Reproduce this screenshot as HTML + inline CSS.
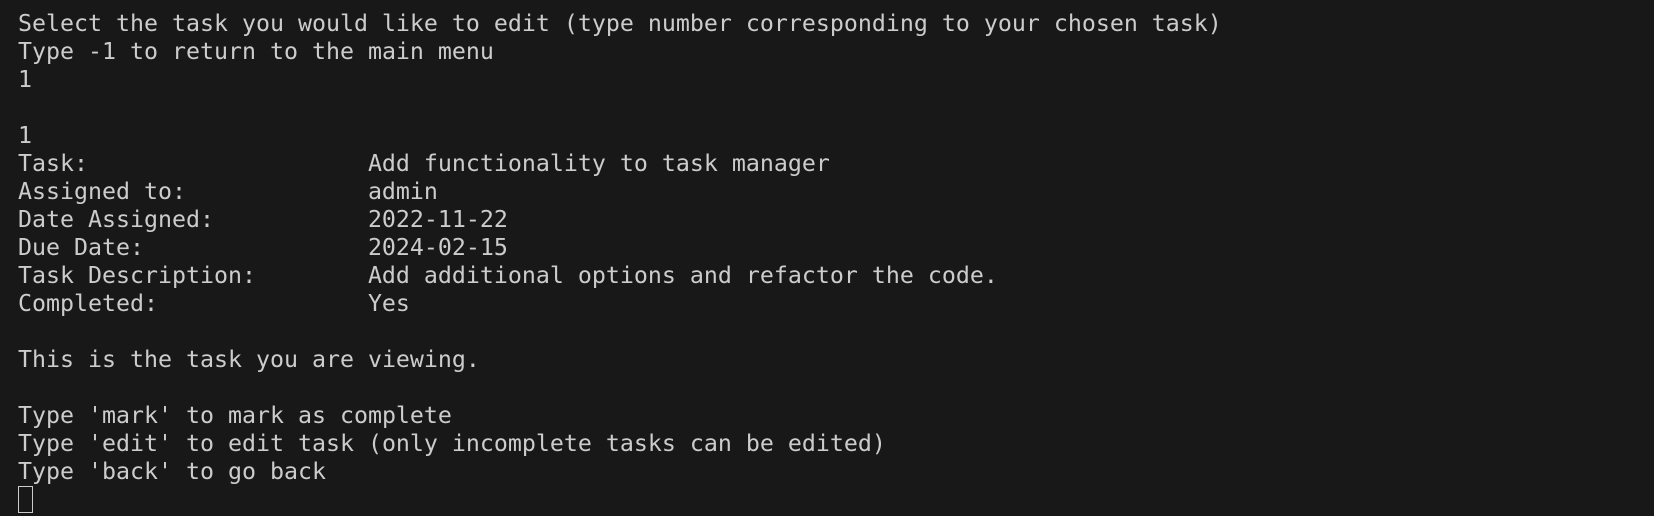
<!DOCTYPE html>
<html><head><style>
html,body{margin:0;padding:0;background:#181818;width:1654px;height:516px;overflow:hidden}
pre{margin:0;position:absolute;left:18px;top:10px;font-family:"DejaVu Sans Mono","Liberation Mono",monospace;font-size:23.25px;line-height:28px;color:#cccccc;white-space:pre}
pre b{font-weight:normal;display:inline-block;width:25ch}
.cur{position:absolute;left:18px;top:486px;width:13px;height:25px;border:1px solid #cccccc}
</style></head><body>
<pre>Select the task you would like to edit (type number corresponding to your chosen task)
Type -1 to return to the main menu
1

1
<b>Task:</b>Add functionality to task manager
<b>Assigned to:</b>admin
<b>Date Assigned:</b>2022-11-22
<b>Due Date:</b>2024-02-15
<b>Task Description:</b>Add additional options and refactor the code.
<b>Completed:</b>Yes

This is the task you are viewing.

Type 'mark' to mark as complete
Type 'edit' to edit task (only incomplete tasks can be edited)
Type 'back' to go back</pre>
<div class="cur"></div>
</body></html>
